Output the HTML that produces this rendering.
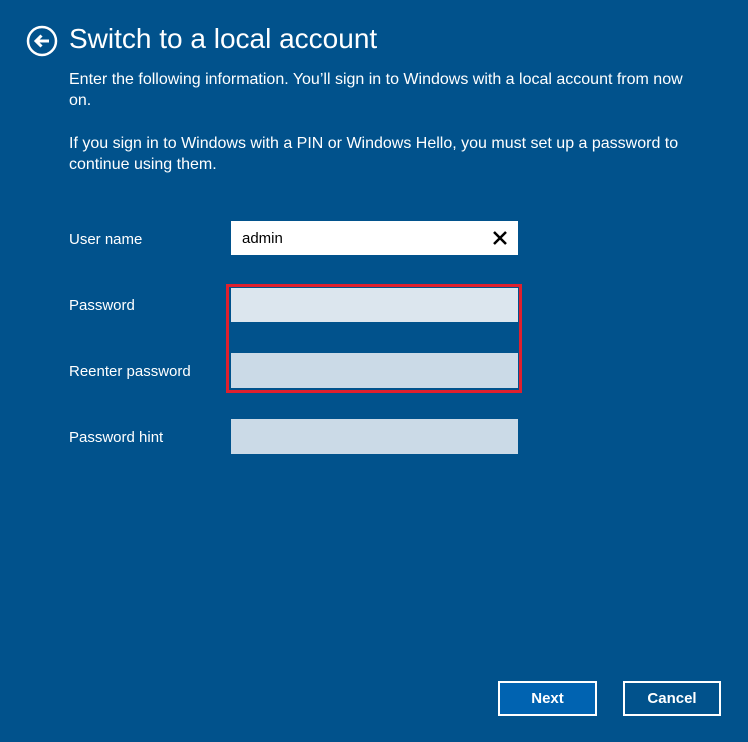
<!DOCTYPE html>
<html><head><style>
body{margin:0;width:748px;height:742px;background:#01528c;font-family:"Liberation Sans",sans-serif;color:#fff;position:relative;overflow:hidden}
.a{position:absolute}
.t{font-size:15px;line-height:21px;white-space:nowrap}
.p{font-size:16px}
.box{position:absolute;left:231px;width:287px;height:34px}
</style></head><body>
<svg class="a" style="left:26px;top:25px" width="32" height="32" viewBox="0 0 32 32"><circle cx="16" cy="16" r="14" fill="none" stroke="#fff" stroke-width="2.5"/><path d="M23 16H10M15.5 10.5L10 16l5.5 5.5" fill="none" stroke="#fff" stroke-width="3"/></svg>
<div class="a" style="left:69px;top:23px;font-size:28px;font-weight:300">Switch to a local account</div>
<div class="a t p" style="left:69px;top:69px">Enter the following information. You’ll sign in to Windows with a local account from now<br>on.</div>
<div class="a t p" style="left:69px;top:133px">If you sign in to Windows with a PIN or Windows Hello, you must set up a password to<br>continue using them.</div>
<div class="a t" style="left:69px;top:229px">User name</div>
<div class="a t" style="left:69px;top:295px">Password</div>
<div class="a t" style="left:69px;top:361px">Reenter password</div>
<div class="a t" style="left:69px;top:427px">Password hint</div>
<div class="box" style="top:221px;background:#fff;color:#000"><span class="a t" style="left:11px;top:7px">admin</span>
<svg class="a" style="left:261px;top:9px" width="16" height="16"><path d="M2 2L14 14M14 2L2 14" stroke="#000" stroke-width="2.5"/></svg></div>
<div class="a" style="left:226px;top:284px;width:290px;height:103px;border:3px solid #e0202e"></div>
<div class="box" style="top:288px;background:#dce6ee"></div>
<div class="box" style="top:353px;background:#cbdae7;height:35px"></div>
<div class="box" style="top:419px;background:#cbdae7;height:35px"></div>
<div class="a" style="left:498px;top:681px;width:95px;height:31px;border:2px solid #fff;background:#0063b1;font-weight:bold;font-size:15px;text-align:center;line-height:31px">Next</div>
<div class="a" style="left:623px;top:681px;width:94px;height:31px;border:2px solid #fff;font-weight:bold;font-size:15px;text-align:center;line-height:31px">Cancel</div>
</body></html>
